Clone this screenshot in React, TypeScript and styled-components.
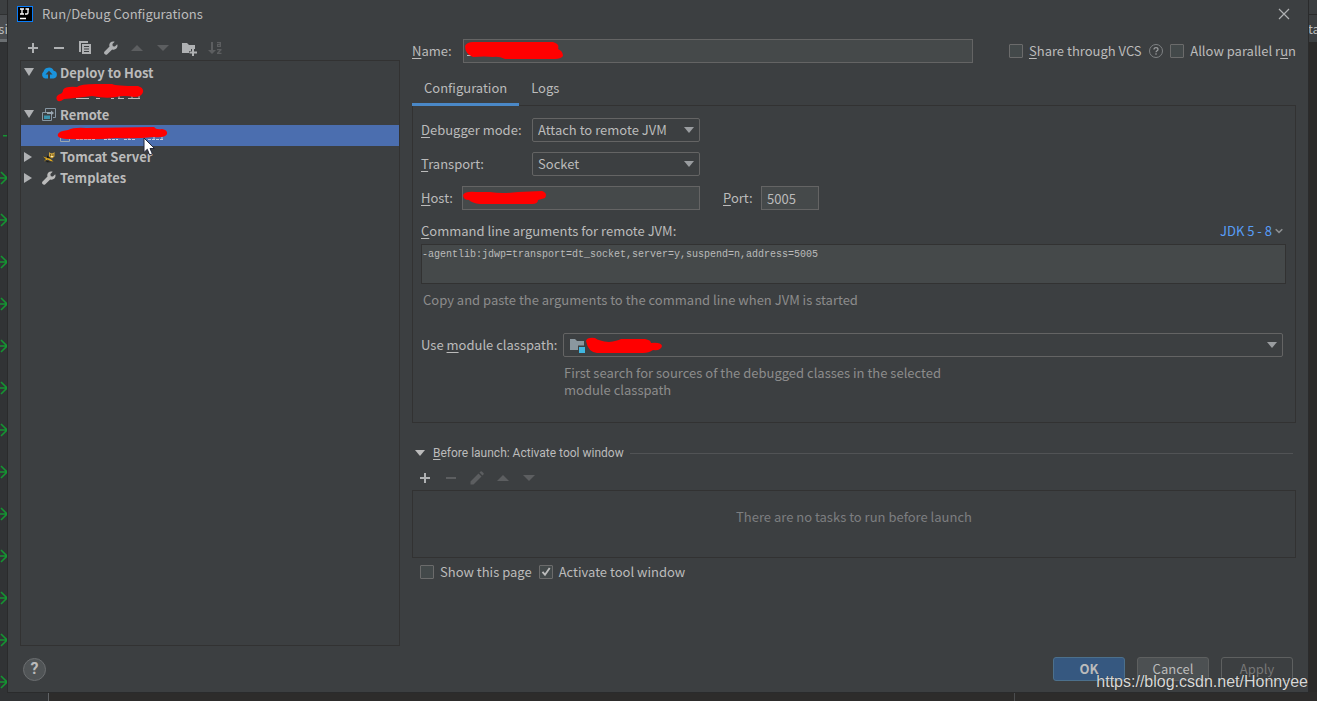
import React from 'react';
import styled, { createGlobalStyle, css } from 'styled-components';

const ui = '"Noto Sans CJK SC", "Noto Sans", sans-serif';
const c = {
  panel: '#3c3f41',
  field: '#45494a',
  line: '#323232',
  edge: '#646464',
  text: '#bbbbbb',
  hint: '#8c8c8c',
  icon: '#afb1b3',
  iconOff: '#5c5e60',
  accent: '#4a88c7',
  select: '#4b6eaf',
};

const Global = createGlobalStyle`
  * { box-sizing: border-box; }
  body { margin: 0; background: #2b2b2b; color: ${c.text}; font: 13px/20px ${ui}; }
  button, input, select, textarea { font: inherit; color: inherit; margin: 0; }
  svg { display: block; flex: none; }
  u { text-decoration-thickness: 1px; text-underline-offset: 2px; }
`;

/* ---------- editor behind the dialog ---------- */
const Backdrop = styled.div`
  display: grid;
  grid-template-columns: 8px minmax(0, 1fr) 9px;
  grid-template-rows: 1fr 9px;
  min-height: 100vh;
  overflow: hidden;
`;
const Gutter = styled.div`
  contain: size;
  background: #313335;
  overflow: hidden;
`;
const RightStrip = styled(Gutter)`
  background: #2b2a29;
`;
const StripHead = styled.div`
  height: 42px;
  padding-top: 14px;
  background: linear-gradient(#3c3f41 14px, #2f3132 14px, #2f3132 15px, #4a4d50 15px);
  border-bottom: 3px solid #6b6f72;
  white-space: nowrap;
  line-height: 30px;
  overflow: hidden;
`;
const LeftHead = styled(StripHead)`
  display: flex;
  justify-content: flex-end;
`;
const PlainHead = styled(StripHead)`
  background: linear-gradient(#3c3f41 14px, #2b2b2b 14px, #2b2b2b 15px, #3c3f41 15px);
  border-bottom: 0;
`;
const GutterMarks = styled.div`
  display: flex;
  flex-direction: column;
  padding-top: 73px;
`;
const BottomStrip = styled.div`
  grid-column: 1 / -1;
  display: flex;
  background: #2d2c2b;
`;
const BottomGutter = styled.div`
  width: 49px;
  background: #313335;
  border-right: 1px solid #606366;
`;
const BottomEditor = styled.div`
  flex: 966;
  border-right: 1px solid #4b4d4f;
`;
const BottomRest = styled.div`
  flex: 302;
`;

/* ---------- dialog frame ---------- */
const Dialog = styled.main`
  position: relative;
  display: flex;
  flex-direction: column;
  min-width: 0;
  background: ${c.panel};
  box-shadow: 0 0 0 1px #2a2b2c;
`;
const TitleBar = styled.header`
  display: flex;
  align-items: center;
  gap: 9px;
  height: 28px;
  padding: 0 16px 0 9px;
`;
const Title = styled.h1`
  flex: 1;
  margin: 0;
  font-size: 13px;
  font-weight: 400;
`;
const IconButton = styled.button`
  display: grid;
  place-items: center;
  width: 16px;
  height: 16px;
  padding: 0;
  border: 0;
  background: none;
  color: ${c.icon};
  &:disabled { color: ${c.iconOff}; }
`;
const Body = styled.div`
  flex: 1;
  display: grid;
  grid-template-columns: 380px minmax(0, 1fr);
  gap: 12px;
  padding: 0 12px;
`;
const Toolbar = styled.div`
  display: flex;
  align-items: center;
  gap: 10px;
  height: 24px;
  padding-left: 5px;
`;

/* ---------- configuration tree ---------- */
const Sidebar = styled.section`
  display: flex;
  flex-direction: column;
  padding-top: 8px;
`;
const Tree = styled.ul`
  flex: 1;
  margin: 0;
  padding: 1px 0 0;
  list-style: none;
  border: 1px solid ${c.line};
`;
const Node = styled.li<{ $child?: boolean; $selected?: boolean }>`
  display: flex;
  align-items: center;
  gap: 3px;
  height: 21px;
  line-height: 19px;
  padding-left: 3px;
  font-weight: 700;
  ${p => p.$child && css`padding-left: 35px;`}
  ${p => p.$selected && css`background: ${c.select};`}
`;
const NodeIcon = styled.span`
  margin-left: 4px;
`;

/* ---------- form ---------- */
const Form = styled.section`
  min-width: 0;
  padding-top: 11px;
`;
const Row = styled.div`
  display: flex;
  align-items: center;
  height: 24px;
`;
const NameLabel = styled.label`
  width: 51px;
`;
const FieldBox = styled.div<{ $grow?: boolean; $w?: number }>`
  position: relative;
  ${p => (p.$grow ? css`flex: 1;` : css`width: ${p.$w}px;`)}
`;
const Field = styled.input`
  display: block;
  width: 100%;
  height: 24px;
  padding: 0 5px;
  border: 1px solid ${c.edge};
  background: ${c.field};
  line-height: 20px;
  outline: 0;
`;
const Scribble = styled.span`
  position: absolute;
  top: 0;
  left: 0;
  pointer-events: none;
`;
const NameOptions = styled.div`
  display: flex;
  align-items: center;
  width: 287px;
  margin-left: 36px;
  justify-content: space-between;
`;
const Check = styled.label`
  display: flex;
  align-items: center;
  gap: 6px;
  white-space: nowrap;
`;
const Box = styled.input`
  appearance: none;
  width: 14px;
  height: 14px;
  border: 1px solid #6b6b6b;
  border-radius: 1px;
  background: #43494a center / 12px 12px no-repeat;
  &:checked {
    background-image: url("data:image/svg+xml,%3Csvg xmlns='http://www.w3.org/2000/svg' viewBox='0 0 12 12'%3E%3Cpath d='M2.5 5.8 5 8.8 9.7 2' fill='none' stroke='%23bbbbbb' stroke-width='1.9'/%3E%3C/svg%3E");
  }
`;
const Tabs = styled.div`
  display: flex;
  margin-top: 10px;
  height: 32px;
`;
const Tab = styled.button<{ $active?: boolean }>`
  position: relative;
  height: 33px;
  padding: 0 12px;
  border: 0;
  border-bottom: 3px solid ${p => (p.$active ? c.accent : 'transparent')};
  background: none;
  line-height: 26px;
`;
const Panel = styled.div`
  border: 1px solid ${c.line};
  padding: 12px 9px 24px 8px;
`;
const Stack = styled.div`
  display: flex;
  flex-direction: column;
  gap: 10px;
`;
const Label = styled.label<{ $w: number }>`
  width: ${p => p.$w}px;
  white-space: nowrap;
`;
const Combo = styled.div<{ $w?: number }>`
  position: relative;
  ${p => (p.$w ? css`width: ${p.$w}px;` : css`flex: 1; margin-right: 3px;`)}
`;
const Select = styled.select`
  appearance: none;
  display: block;
  width: 100%;
  height: 24px;
  padding: 0 20px 0 5px;
  border: 1px solid ${c.edge};
  border-radius: 2px;
  background: ${c.panel};
  outline: 0;
`;
const ComboArrow = styled.span`
  position: absolute;
  top: 9px;
  right: 6px;
  color: #9a9da0;
  pointer-events: none;
`;
const ComboIcon = styled.span`
  position: absolute;
  top: 4px;
  left: 6px;
  pointer-events: none;
`;
const PortLabel = styled.label`
  width: 61px;
  padding-left: 23px;
`;
const ArgsHead = styled.div`
  display: flex;
  justify-content: space-between;
  margin-top: 10px;
  padding-right: 3px;
  height: 24px;
  line-height: 22px;
`;
const JdkLink = styled.a`
  display: flex;
  align-items: center;
  gap: 3px;
  height: 22px;
  color: #589df6;
  text-decoration: none;
`;
const Args = styled.textarea`
  display: block;
  width: 100%;
  height: 40px;
  padding: 3px 0;
  border: 1px solid ${c.line};
  background: ${c.field};
  font: 10px/13px "Liberation Mono", monospace;
  resize: none;
  outline: 0;
`;
const Hint = styled.p`
  margin: 0;
  padding: 6px 2px 23px;
  color: ${c.hint};
`;
const ModuleHint = styled.p`
  margin: 7px 0 0 143px;
  max-width: 400px;
  line-height: 17px;
  color: ${c.hint};
`;
const Section = styled.div`
  display: flex;
  align-items: center;
  gap: 8px;
  height: 20px;
  margin: 20px 3px 0 3px;
  font: 12px/20px Roboto, sans-serif;
  &::after {
    content: '';
    flex: 1;
    height: 1px;
    background: #515355;
  }
`;
const SectionTitle = styled.h2`
  margin: 0 -2px 0 0;
  font: inherit;
`;
const SmallToolbar = styled(Toolbar)`
  margin-top: 3px;
`;
const TaskList = styled.div`
  height: 68px;
  border: 1px solid ${c.line};
  padding-top: 16px;
  text-align: center;
  color: #7c7e80;
`;
const Checks = styled.div`
  display: flex;
  gap: 7px;
  padding: 4px 8px 0;
`;

/* ---------- footer ---------- */
const Footer = styled.footer`
  display: flex;
  align-items: center;
  gap: 12px;
  height: 46px;
  padding: 0 15px;
`;
const HelpButton = styled.button`
  width: 23px;
  height: 23px;
  margin-right: auto;
  padding: 0;
  border: 1px solid #6b6e70;
  border-radius: 50%;
  background: #505456;
  font: 700 16px/20px Roboto, sans-serif;
`;
const Button = styled.button<{ $primary?: boolean }>`
  width: 72px;
  height: 24px;
  padding: 0;
  border: 1px solid #5e6060;
  border-radius: 3px;
  background: #4c5052;
  line-height: 20px;
  ${p => p.$primary && css`
    border-color: #4c708c;
    background: #365880;
    font-weight: 700;
  `}
  &:disabled {
    background: none;
    color: #777777;
  }
`;
const Watermark = styled.div`
  position: absolute;
  right: 0;
  bottom: 0;
  font: 16px/20px "Liberation Sans", sans-serif;
  color: #d8d8d8;
  text-shadow: 0 0 1px #222222;
`;
const Pointer = styled.span`
  position: absolute;
  left: 135px;
  top: 137px;
`;

/* ---------- icons ---------- */
const Svg = ({ w = 16, h = 16, children }: { w?: number; h?: number; children: React.ReactNode }) => (
  <svg width={w} height={h} viewBox={`0 0 ${w} ${h}`} fill="currentColor" aria-hidden="true">{children}</svg>
);
const Plus = () => <Svg><path d="M7 3h2v4h4v2H9v4H7V9H3V7h4z" /></Svg>;
const Minus = () => <Svg><path d="M3 7h10v2H3z" /></Svg>;
const Copy = () => (
  <Svg><path d="M2 1h9v2H4v9H2z" /><path fillRule="evenodd" d="M5 4h9v10H5zM7 6v1h5V6zM7 8.500v1h5v-1zM7 11v1h5v-1z" /></Svg>
);
const Wrench = () => (
  <Svg><path d="M14.2 4.3 11.9 6.6 9.8 6.2 9.4 4.1 11.7 1.8C10.200 1.200 8.500 1.400 7.400 2.600 6.300 3.700 6 5.200 6.500 6.600L1.600 11.500C.900 12.200.900 13.400 1.600 14.100 2.400 14.900 3.600 14.900 4.300 14.200L9.200 9.400C10.700 9.900 12.300 9.600 13.400 8.500 14.500 7.400 14.800 5.700 14.200 4.300Z" /></Svg>
);
const Up = () => <Svg><path d="M2 11h12L8 5z" /></Svg>;
const Down = () => <Svg><path d="M2 5h12l-6 6z" /></Svg>;
const FolderPlus = () => (
  <Svg><path d="M1 3h5l2 2h6v4h-4v2H8v2H1z" /><path d="M11 9h2v2.500h3v2h-3V16h-2v-2.500H8.500v-2H11z" /></Svg>
);
const SortAZ = () => (
  <Svg>
    <path d="M4 2h2v8h3l-4 4-4-4h3z" />
    <path d="M10 2h4v5h-4V4h2.600V3.200H10zM11.300 5v1h1.300V5zM10 9h4.500v1.200L12 12.800h2.500V14H10v-1.200l2.500-2.600H10z" fillRule="evenodd" />
  </Svg>
);
const Pencil = () => <Svg><path d="M1.500 11.500 9.500 3.500 12.500 6.500 4.500 14.500h-3zM10.500 2.500l1-1q.7-.6 1.400 0l1.600 1.600q.6.700 0 1.400l-1 1z" /></Svg>;
const Close = () => <Svg><path d="M3 3l10 10M13 3 3 13" stroke="currentColor" strokeWidth="1.200" /></Svg>;
const Open = () => <Svg w={10} h={10}><path d="M0 0h10L5 8z" fill={c.icon} /></Svg>;
const Shut = () => <Svg w={10} h={10}><path d="M0 0v10l8-5z" fill={c.icon} /></Svg>;
const Triangle = () => <Svg w={10} h={6}><path d="M0 0h10L5 6z" /></Svg>;
const Chevron = () => <Svg w={8} h={8}><path d="M.7 2.200 4 5.400l3.300-3.200" fill="none" stroke="#8c8f91" strokeWidth="1.600" /></Svg>;
const Cloud = () => (
  <Svg><path fill="#1a93dc" fillRule="evenodd" d="M4 13.500A4 4 0 0 1 2.600 6.500 5.300 5 0 0 1 12.700 5.800 3.900 3.900 0 0 1 12.500 13.500H9V9.600h2.500L8 5.800 4.500 9.600H7v3.900z" /></Svg>
);
const RemoteIcon = () => (
  <Svg>
    <path d="M4.500 5V1.500h10v9H12" fill="none" stroke="#8797a3" />
    <path d="M1.500 5.500h9v8h-9z" fill={c.panel} stroke="#8797a3" />
    <path d="M3 8.500h6V12H3z" fill="#3b93ad" />
    <path d="M6 5h4V3.500L13 6l-3 2.500V7H6z" fill="#9aa7b0" />
  </Svg>
);
const Tomcat = () => (
  <Svg>
    <path d="M8 3l1.500 1.300h2.500L13.500 3v4.500L11 9.500 8 7.500z" fill="#d2a63c" />
    <path d="M2 7.500 6.500 9l3 1 3 2.500-3-.5-3-1.500L3 12.500 5 10z" fill="#e0a91b" />
    <path d="M6 6.500l3 2-3 .7zM4 11l6 2.200H6zM9 5.500h1v1H9zM11.500 5.500h1v1h-1z" fill="#1f1c12" />
    <path d="M10 7h2v1h-2z" fill="#f4e7b8" />
  </Svg>
);
const ModuleIcon = () => (
  <Svg><path d="M1 2h5l2 2h7v4.500H9V13H1z" fill="#8a979f" /><path d="M10 10h6v6h-6z" fill="#40b6e0" /></Svg>
);
const HelpMark = () => (
  <Svg>
    <circle cx="8" cy="8" r="6.500" fill="none" stroke="#7f8284" />
    <path d="M6 6.500C6 5.200 6.900 4.600 8 4.600S10 5.300 10 6.400C10 7.700 8 7.700 8 9.300M8 10.300v1.400" fill="none" stroke="#9a9c9e" strokeWidth="1.200" />
  </Svg>
);
const Logo = () => (
  <Svg>
    <path d="M0 0h16v16H0z" fill="#087cfa" />
    <path d="M1 1h14v14H1z" fill="#000" />
    <path d="M3 3h4M5 3v5M3 8h4M8.500 3H12M11 3v3.800q0 1.200-1.300 1.200H8M3 12.500h6" fill="none" stroke="#fff" strokeWidth="1.300" />
  </Svg>
);
const RunArrow = () => <Svg w={8} h={42}><path d="M0 21h7M1 15 7 21l-6 6" fill="none" stroke="#159432" strokeWidth="1.600" /></Svg>;
const RunDash = () => <Svg w={8} h={42}><path d="M3 20h4v1.500H3z" fill="#159432" /></Svg>;
const Cursor = () => (
  <Svg w={14} h={20}><path d="M1 1v14.500l3.300-3.200L6.600 18l2.800-1.200L7 11.500h4.500z" fill="#fff" stroke="#22273a" strokeWidth="1" /></Svg>
);

/* Red marker strokes over private values */
const Marker = ({ d, w, h = 24, children }: { d: string; w: number; h?: number; children?: React.ReactNode }) => (
  <Svg w={w} h={h}>{children}<path d={d} fill="#ff0000" /></Svg>
);

export default function App() {
  return (
    <>
      <Global />
      <Backdrop>
        <Gutter aria-hidden="true">
          <LeftHead>si</LeftHead>
          <GutterMarks>
            <RunDash />
            {Array.from({ length: 13 }, (_, i) => <RunArrow key={i} />)}
          </GutterMarks>
        </Gutter>
        <Dialog>
          <TitleBar>
            <Logo />
            <Title>Run/Debug Configurations</Title>
            <IconButton aria-label="Close"><Close /></IconButton>
          </TitleBar>
          <Body>
            <Sidebar>
              <Toolbar>
                <IconButton aria-label="Add"><Plus /></IconButton>
                <IconButton aria-label="Remove"><Minus /></IconButton>
                <IconButton aria-label="Copy"><Copy /></IconButton>
                <IconButton aria-label="Edit templates"><Wrench /></IconButton>
                <IconButton aria-label="Move up" disabled><Up /></IconButton>
                <IconButton aria-label="Move down" disabled><Down /></IconButton>
                <IconButton aria-label="New folder"><FolderPlus /></IconButton>
                <IconButton aria-label="Sort" disabled><SortAZ /></IconButton>
              </Toolbar>
              <Tree>
                <Node><Open /><NodeIcon><Cloud /></NodeIcon>Deploy to Host</Node>
                <Node $child>
                  <Marker w={90} h={21} d="M1 17Q-1 13 4 11 7 10 7 7 9 3 21 4 24 1 40 1H56Q60 3 82 3 88 5 87 9 86 14 78 14 68 12 60 14 50 16 36 13 20 15 8 16 3 20 1 17Z">
                    <path d="M20 15.500h13M40 15.500h4M55 15.500h3M62 15.500h6M72 15.500h12M63 13v3M76 13v3M83 13v3" stroke={c.text} />
                  </Marker>
                </Node>
                <Node><Open /><NodeIcon><RemoteIcon /></NodeIcon>Remote</Node>
                <Node $child $selected>
                  <Marker w={114} h={21} d="M2 9Q3 6 12 5 18 2 30 3L98 2Q100 5 106 4 112 5 111 9 109 13 98 12 80 14 60 13 40 15 14 14 0 14 2 9Z">
                    <path d="M4.500 12v4.500h9V12" fill="none" stroke="#9aa7b0" />
                    <path d="M20 14.500h20M48 14.500h14M68 14.500h12M92 14.500h16M23 12v4M32 12v4M53 12v4M73 12v4M98 12v4M106 12v4" stroke="#c5cbd8" strokeDasharray="3 1" />
                  </Marker>
                </Node>
                <Node><Shut /><NodeIcon><Tomcat /></NodeIcon>Tomcat Server</Node>
                <Node><Shut /><NodeIcon><Wrench /></NodeIcon>Templates</Node>
              </Tree>
            </Sidebar>
            <Form>
              <Row>
                <NameLabel htmlFor="name"><u>N</u>ame:</NameLabel>
                <FieldBox $grow>
                  <Field id="name" />
                  <Scribble>
                    <Marker w={104} d="M2 7Q4 3 10 3H90Q97 5 95 10 100 12 100 17 98 20 92 20H42Q36 17 30 18 22 17 10 18 2 15 2 7Z">
                      <path d="M4 16.500h4" stroke={c.text} />
                    </Marker>
                  </Scribble>
                </FieldBox>
                <NameOptions>
                  <Check><Box type="checkbox" /><span><u>S</u>hare through VCS</span></Check>
                  <HelpMark />
                  <Check><Box type="checkbox" /><span>Allow parallel r<u>u</u>n</span></Check>
                </NameOptions>
              </Row>
              <Tabs role="tablist">
                <Tab role="tab" aria-selected="true" $active>Configuration</Tab>
                <Tab role="tab" aria-selected="false">Logs</Tab>
              </Tabs>
              <Panel>
                <Stack>
                  <Row>
                    <Label $w={111} htmlFor="mode"><u>D</u>ebugger mode:</Label>
                    <Combo $w={168}>
                      <Select id="mode"><option>Attach to remote JVM</option></Select>
                      <ComboArrow><Triangle /></ComboArrow>
                    </Combo>
                  </Row>
                  <Row>
                    <Label $w={111} htmlFor="transport"><u>T</u>ransport:</Label>
                    <Combo $w={168}>
                      <Select id="transport"><option>Socket</option></Select>
                      <ComboArrow><Triangle /></ComboArrow>
                    </Combo>
                  </Row>
                  <Row>
                    <Label $w={41} htmlFor="host"><u>H</u>ost:</Label>
                    <FieldBox $w={238}>
                      <Field id="host" />
                      <Scribble>
                        <Marker w={88} d="M1 9Q3 5 14 6H28Q40 8 56 6L80 5Q86 7 83 12 80 13 76 14 76 18 70 18H18Q10 17 7 14 1 14 1 9Z" />
                      </Scribble>
                    </FieldBox>
                    <PortLabel htmlFor="port"><u>P</u>ort:</PortLabel>
                    <FieldBox $w={58}><Field id="port" defaultValue="5005" /></FieldBox>
                  </Row>
                </Stack>
                <ArgsHead>
                  <label htmlFor="args"><u>C</u>ommand line arguments for remote JVM:</label>
                  <JdkLink href="#jdk">JDK 5 - 8<Chevron /></JdkLink>
                </ArgsHead>
                <Args id="args" readOnly spellCheck={false} defaultValue="-agentlib:jdwp=transport=dt_socket,server=y,suspend=n,address=5005" />
                <Hint>Copy and paste the arguments to the command line when JVM is started</Hint>
                <Row>
                  <Label $w={142} htmlFor="module">Use <u>m</u>odule classpath:</Label>
                  <Combo>
                    <Select id="module"><option aria-label="Module" /></Select>
                    <ComboIcon><ModuleIcon /></ComboIcon>
                    <Scribble>
                      <Marker w={104} d="M23 8Q24 4 32 5 36 8 46 9 54 8 58 6L82 6Q88 7 88 10 98 9 99 13 98 18 90 17 86 20 80 20H34Q25 19 23 8Z" />
                    </Scribble>
                    <ComboArrow><Triangle /></ComboArrow>
                  </Combo>
                </Row>
                <ModuleHint>First search for sources of the debugged classes in the selected module classpath</ModuleHint>
              </Panel>
              <Section>
                <Triangle />
                <SectionTitle><u>B</u>efore launch: Activate tool window</SectionTitle>
              </Section>
              <SmallToolbar>
                <IconButton aria-label="Add task"><Plus /></IconButton>
                <IconButton aria-label="Remove task" disabled><Minus /></IconButton>
                <IconButton aria-label="Edit task" disabled><Pencil /></IconButton>
                <IconButton aria-label="Move task up" disabled><Up /></IconButton>
                <IconButton aria-label="Move task down" disabled><Down /></IconButton>
              </SmallToolbar>
              <TaskList>There are no tasks to run before launch</TaskList>
              <Checks>
                <Check><Box type="checkbox" />Show this page</Check>
                <Check><Box type="checkbox" defaultChecked />Activate tool window</Check>
              </Checks>
            </Form>
          </Body>
          <Footer>
            <HelpButton aria-label="Help">?</HelpButton>
            <Button $primary>OK</Button>
            <Button>Cancel</Button>
            <Button disabled>Apply</Button>
          </Footer>
          <Watermark>https://blog.csdn.net/Honnyee</Watermark>
          <Pointer><Cursor /></Pointer>
        </Dialog>
        <RightStrip aria-hidden="true"><PlainHead>ta</PlainHead></RightStrip>
        <BottomStrip aria-hidden="true"><BottomGutter /><BottomEditor /><BottomRest /></BottomStrip>
      </Backdrop>
    </>
  );
}
